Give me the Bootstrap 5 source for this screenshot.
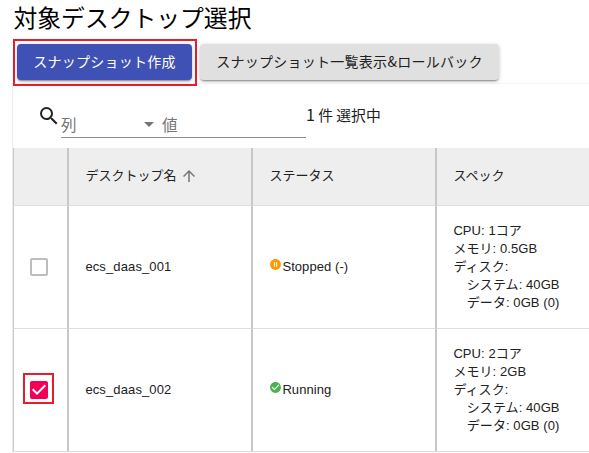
<!DOCTYPE html>
<html lang="ja">
<head>
<meta charset="utf-8">
<meta name="viewport" content="width=device-width, initial-scale=1">
<title>対象デスクトップ選択</title>
<link href="https://cdn.jsdelivr.net/npm/bootstrap@5.3.0/dist/css/bootstrap.min.css" rel="stylesheet">
<style>
html, body { overflow: hidden; }
body { font-family: "Liberation Sans", "Noto Sans CJK JP", sans-serif; color: #212121; width: 589px; height: 453px; background: #fff; }
.page-title { font-size: 23.8px; line-height: 37px; height: 39px; padding-left: 13.5px; color: #000; white-space: nowrap; }
.actions { height: 44px; padding-left: 13px; }
.marked { border: 2px solid #e81c2a; }
.mark-action { width: 184px; height: 47px; padding: 3px 2px 0; }
.action-btn { height: 36px; padding: 0 16px 2px; border: 0; border-radius: 4px; font-size: 14px; letter-spacing: .26px; line-height: 34px; white-space: nowrap;
  font-family: "Noto Sans CJK JP", sans-serif; box-shadow: 0 2px 2px -1px rgba(0,0,0,.4), 0 1px 4px rgba(0,0,0,.2); }
.action-main { width: 175px; background: #3f51b5; color: #fff; }
.action-sub { width: 299px; margin: 5px 0 0 3px; padding: 0 15px 2px; background: #e0e0e0; color: #212121; }
.panel { margin-left: 12px; width: 577px; height: 370px; border-left: 1px solid #ececec; border-top: 1px solid #f5f5f5; }
.filters { height: 64px; padding-left: 24px; font-family: "Noto Sans CJK JP", sans-serif; }
.filters svg { flex: none; }
.filter-line { width: 245px; height: 25px; margin-top: 29px; border-bottom: 1px solid #8b8b8b; color: #757575; font-size: 15.5px; line-height: 23px; }
.filter-column { width: 101px; height: 24px; padding-right: 8px; }
.filter-column svg { margin-top: -1px; }
.selection-count { font-size: 14.8px; line-height: 22px; margin-top: 19px; color: #212121; white-space: nowrap; }
.count-num { font-size: 16px; }
.desktops { table-layout: fixed; width: 576px; margin: 0; border-collapse: separate; border-spacing: 0; font-size: 13px; line-height: 18px; color: #212121; }
.desktops th, .desktops td { padding: 0 15px 0 16.4px; border: 0; border-bottom: 1px solid #dedede; border-right: 2px solid #c8c8c8; vertical-align: middle; font-weight: 400; white-space: nowrap; background: transparent; }
.desktops th:first-child, .desktops td:first-child { border-left: 1px solid #c8c8c8; padding: 0; }
.desktops th:last-child, .desktops td:last-child { border-right: 0; }
.desktops th { height: 58px; background: #eee; line-height: 20px; padding-bottom: 1px; }
.desktops td { height: 123px; letter-spacing: .07px; }
.desktops .desktop-name { letter-spacing: .12px; }
.check-cell { width: 31px; height: 31px; margin-left: 9px; }
.check-cell:not(.marked) { border: 2px solid transparent; }
.check-cell.marked { margin-bottom: 3px; }
.check-cell.marked svg { flex: none; margin-top: 3px; }
.spec { height: 90px; }
.spec div { height: 18px; }
.spec .sub { padding-left: 13.4px; }
.status-icon { margin-top: -5px; }
</style>
</head>
<body>
<h1 class="page-title m-0 fw-normal">対象デスクトップ選択</h1>
<div class="actions d-flex align-items-start">
  <div class="marked mark-action flex-shrink-0"><button class="btn action-btn action-main" type="button">スナップショット作成</button></div>
  <button class="btn action-btn action-sub flex-shrink-0" type="button">スナップショット一覧表示&amp;ロールバック</button>
</div>
<main class="panel">
  <div class="filters d-flex align-items-start">
    <svg width="24" height="24" viewBox="0 0 24 24" style="margin-top:20px"><path fill="#212121" d="M15.5 14h-.79l-.28-.27A6.47 6.47 0 0 0 16 9.5 6.5 6.5 0 1 0 9.5 16c1.61 0 3.09-.59 4.23-1.57l.27.28v.79l5 4.99L20.49 19l-4.99-5zm-6 0C7.01 14 5 11.99 5 9.5S7.01 5 9.5 5 14 7.01 14 9.5 11.99 14 9.5 14z"/></svg>
    <div class="filter-line d-flex flex-shrink-0">
      <div class="filter-column d-flex align-items-start justify-content-between"><span>列</span><svg class="align-self-center" width="10" height="5" viewBox="0 0 10 5"><path fill="#757575" d="M0 0h10L5 5z"/></svg></div>
      <span>値</span>
    </div>
    <div class="selection-count"><span class="count-num">1</span> 件 選択中</div>
  </div>
  <table class="table desktops">
    <colgroup><col style="width:56px"><col style="width:184px"><col style="width:184px"><col></colgroup>
    <thead><tr>
      <th></th>
      <th><div class="d-flex align-items-center">デスクトップ名<svg class="ms-1" width="18" height="18" viewBox="0 0 24 24"><path fill="#757575" d="m4 12 1.41 1.41L11 7.83V20h2V7.83l5.58 5.59L20 12l-8-8-8 8z"/></svg></div></th>
      <th>ステータス</th><th>スペック</th>
    </tr></thead>
    <tbody>
      <tr>
        <td><div class="check-cell d-flex align-items-center justify-content-center"><svg width="24" height="24" viewBox="0 0 24 24"><path fill="#bdbdbd" d="M19 5v14H5V5h14m0-2H5c-1.100 0-2 .9-2 2v14c0 1.100.9 2 2 2h14c1.100 0 2-.9 2-2V5c0-1.100-.9-2-2-2z"/></svg></div></td>
        <td class="desktop-name">ecs_daas_001</td>
        <td><div class="d-flex align-items-center"><svg class="status-icon" width="13" height="13" viewBox="0 0 24 24"><path fill="#ff9800" d="M12 2C6.480 2 2 6.480 2 12s4.480 10 10 10 10-4.480 10-10S17.520 2 12 2zm-1 14H9V8h2v8zm4 0h-2V8h2v8z"/></svg>Stopped (-)</div></td>
        <td><div class="spec"><div>CPU: 1コア</div><div>メモリ: 0.5GB</div><div>ディスク:</div><div class="sub">システム: 40GB</div><div class="sub">データ: 0GB (0)</div></div></td>
      </tr>
      <tr>
        <td><div class="check-cell marked d-flex align-items-center justify-content-center"><svg width="24" height="24" viewBox="0 0 24 24"><path fill="#f50057" d="M19 3H5c-1.110 0-2 .9-2 2v14c0 1.100.89 2 2 2h14c1.110 0 2-.9 2-2V5c0-1.100-.89-2-2-2zm-9 14-5-5 1.410-1.410L10 14.170l7.590-7.590L19 8l-9 9z"/></svg></div></td>
        <td class="desktop-name">ecs_daas_002</td>
        <td><div class="d-flex align-items-center"><svg class="status-icon" width="13" height="13" viewBox="0 0 24 24"><path fill="#4caf50" d="M12 2C6.480 2 2 6.480 2 12s4.480 10 10 10 10-4.480 10-10S17.520 2 12 2zm-2 15-5-5 1.410-1.410L10 14.170l7.590-7.590L19 8l-9 9z"/></svg>Running</div></td>
        <td><div class="spec"><div>CPU: 2コア</div><div>メモリ: 2GB</div><div>ディスク:</div><div class="sub">システム: 40GB</div><div class="sub">データ: 0GB (0)</div></div></td>
      </tr>
    </tbody>
  </table>
</main>
<script src="https://cdn.jsdelivr.net/npm/bootstrap@5.3.0/dist/js/bootstrap.bundle.min.js"></script>
</body>
</html>
